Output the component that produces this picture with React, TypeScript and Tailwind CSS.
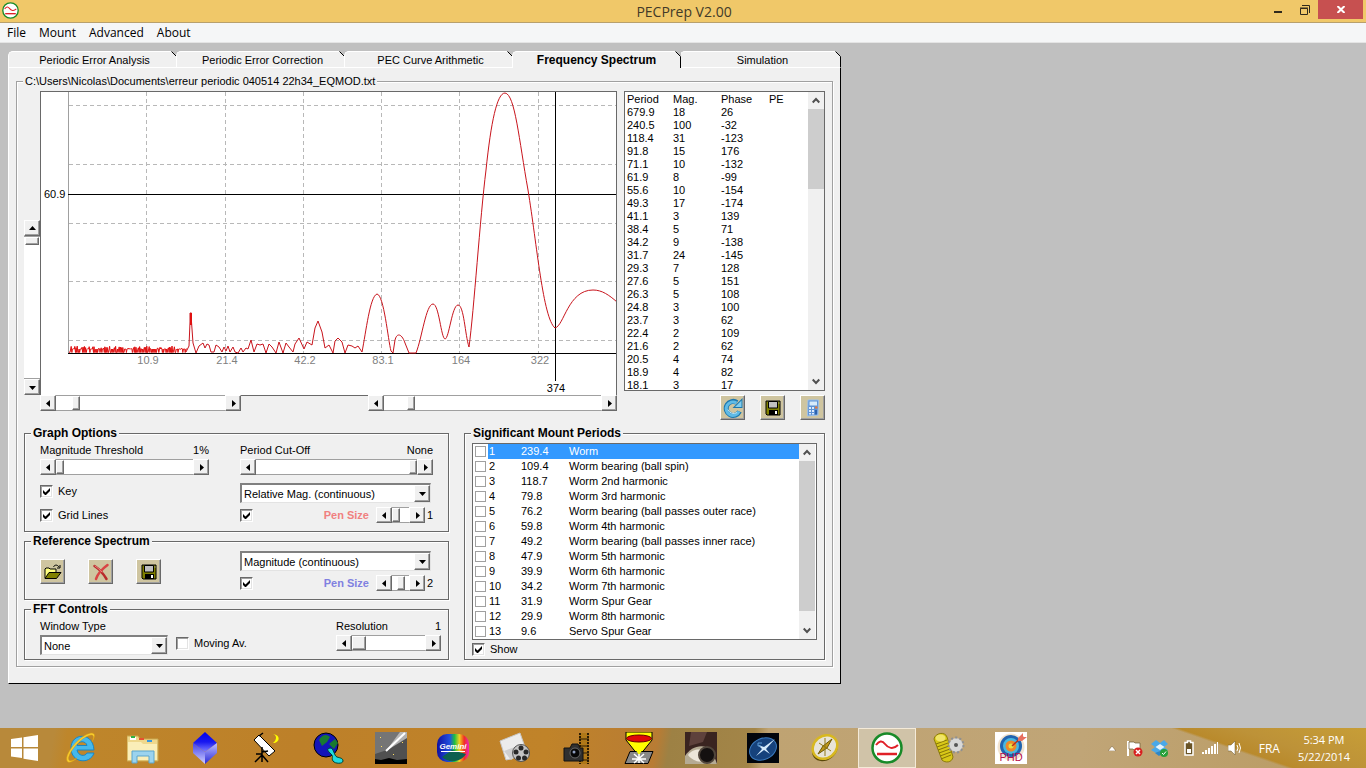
import type { ReactNode } from 'react'

const MENU = ['File', 'Mount', 'Advanced', 'About']

const TABS = [
  'Periodic Error Analysis',
  'Periodic Error Correction',
  'PEC Curve Arithmetic',
  'Frequency Spectrum',
  'Simulation',
]

const SPECTRUM = [
  ['679.9', '18', '26'],
  ['240.5', '100', '-32'],
  ['118.4', '31', '-123'],
  ['91.8', '15', '176'],
  ['71.1', '10', '-132'],
  ['61.9', '8', '-99'],
  ['55.6', '10', '-154'],
  ['49.3', '17', '-174'],
  ['41.1', '3', '139'],
  ['38.4', '5', '71'],
  ['34.2', '9', '-138'],
  ['31.7', '24', '-145'],
  ['29.3', '7', '128'],
  ['27.6', '5', '151'],
  ['26.3', '5', '108'],
  ['24.8', '3', '100'],
  ['23.7', '3', '62'],
  ['22.4', '2', '109'],
  ['21.6', '2', '62'],
  ['20.5', '4', '74'],
  ['18.9', '4', '82'],
  ['18.1', '3', '17'],
]

const MOUNT_PERIODS = [
  ['239.4', 'Worm'],
  ['109.4', 'Worm bearing (ball spin)'],
  ['118.7', 'Worm 2nd harmonic'],
  ['79.8', 'Worm 3rd harmonic'],
  ['76.2', 'Worm bearing (ball passes outer race)'],
  ['59.8', 'Worm 4th harmonic'],
  ['49.2', 'Worm bearing (ball passes inner race)'],
  ['47.9', 'Worm 5th harmonic'],
  ['39.9', 'Worm 6th harmonic'],
  ['34.2', 'Worm 7th harmonic'],
  ['31.9', 'Worm Spur Gear'],
  ['29.9', 'Worm 8th harmonic'],
  ['9.6', 'Servo Spur Gear'],
]

const RAISED =
  'bg-[#f0f0f0] border border-t-white border-l-white border-r-[#696969] border-b-[#696969] shadow-[inset_-1px_-1px_0_#a0a0a0]'

type Direction = 'left' | 'right' | 'up' | 'down'

const ARROWS: Record<Direction, string> = {
  left: 'M5 0v7L1 3.5z',
  right: 'M2 0v7l4-3.5z',
  up: 'M0 5h7L3.5 1z',
  down: 'M0 2h7L3.5 6z',
}

function Arrow({ dir }: { dir: Direction }) {
  return (
    <svg width="7" height="7" viewBox="0 0 7 7">
      <path d={ARROWS[dir]} />
    </svg>
  )
}

function ArrowButton({ dir, label }: { dir: Direction; label: string }) {
  return (
    <button
      type="button"
      aria-label={label}
      className={`flex h-4 w-4 shrink-0 items-center justify-center ${RAISED}`}
    >
      <Arrow dir={dir} />
    </button>
  )
}

const THUMB =
  'appearance-none [&::-webkit-slider-thumb]:appearance-none [&::-webkit-slider-thumb]:bg-[#f0f0f0] [&::-webkit-slider-thumb]:border [&::-webkit-slider-thumb]:border-t-white [&::-webkit-slider-thumb]:border-l-white [&::-webkit-slider-thumb]:border-r-[#696969] [&::-webkit-slider-thumb]:border-b-[#696969] [&::-webkit-slider-thumb]:shadow-[inset_-1px_-1px_0_#a0a0a0]'

type HScrollProps = {
  label: string
  value: number
  className: string
  wide?: boolean
}

function HScroll({ label, value, className, wide }: HScrollProps) {
  return (
    <div className={`flex h-4 ${className}`}>
      <ArrowButton dir="left" label={`${label} down`} />
      <input
        type="range"
        aria-label={label}
        defaultValue={value}
        className={`m-0 h-4 min-w-0 flex-1 border-y border-[#a0a0a0] bg-white [&::-webkit-slider-thumb]:h-[14px] ${
          wide ? '[&::-webkit-slider-thumb]:w-[14px]' : '[&::-webkit-slider-thumb]:w-2'
        } ${THUMB}`}
      />
      <ArrowButton dir="right" label={`${label} up`} />
    </div>
  )
}

function VScroll() {
  return (
    <div className="flex h-[175px] w-4 flex-col">
      <ArrowButton dir="up" label="Scroll up" />
      <input
        type="range"
        aria-label="Vertical scale"
        defaultValue={0}
        className={`m-0 min-h-0 w-4 flex-1 border-x border-[#a0a0a0] bg-white [writing-mode:vertical-lr] [&::-webkit-slider-thumb]:h-2 [&::-webkit-slider-thumb]:w-[14px] ${THUMB}`}
      />
      <ArrowButton dir="down" label="Scroll down" />
    </div>
  )
}

function ListScroll({ thumb }: { thumb: string }) {
  return (
    <div className="flex w-4 shrink-0 flex-col bg-[#f0f0f0]">
      <button type="button" aria-label="Scroll list up" className="flex h-[17px] items-center justify-center">
        <svg width="8" height="7" viewBox="0 0 8 7" fill="none" stroke="#505050" strokeWidth="2">
          <path d="M.7 5.5 4 2l3.300 3.500" />
        </svg>
      </button>
      <div className={`bg-[#cdcdcd] ${thumb}`} />
      <button type="button" aria-label="Scroll list down" className="mt-auto flex h-[17px] items-center justify-center">
        <svg width="8" height="7" viewBox="0 0 8 7" fill="none" stroke="#505050" strokeWidth="2">
          <path d="M.7 1.500 4 5l3.300-3.500" />
        </svg>
      </button>
    </div>
  )
}

function Check({ label, hideLabel, checked }: { label: string; hideLabel?: boolean; checked?: boolean }) {
  return (
    <label className="flex h-[13px] items-center gap-[5px]">
      <span className="relative flex h-[13px] w-[13px]">
        <input
          type="checkbox"
          aria-label={label}
          defaultChecked={checked}
          className="peer h-[13px] w-[13px] appearance-none border border-t-[#696969] border-l-[#696969] border-r-white border-b-white bg-white shadow-[inset_1px_1px_0_#a0a0a0,inset_-1px_-1px_0_#e3e3e3]"
        />
        <svg className="pointer-events-none absolute top-[3px] left-[3px] hidden peer-checked:block" width="7" height="7" viewBox="0 0 7 7">
          <path d="M0 2v3l2 2h1l4-4V0L2.500 4.500z" />
        </svg>
      </span>
      {!hideLabel && <span>{label}</span>}
    </label>
  )
}

function Combo({ label, value, className }: { label: string; value: string; className: string }) {
  return (
    <div className={`relative h-5 ${className}`}>
      <select
        aria-label={label}
        className="h-5 w-full appearance-none rounded-none border-t-2 border-l-2 border-r border-b border-t-[#808080] border-l-[#808080] border-r-[#e3e3e3] border-b-[#e3e3e3] bg-white pl-[2px] text-[11px] leading-4"
      >
        <option>{value}</option>
      </select>
      <span className={`pointer-events-none absolute top-[2px] right-[1px] flex h-[17px] w-4 items-center justify-center ${RAISED}`}>
        <Arrow dir="down" />
      </span>
    </div>
  )
}

function Group({ title, className, children }: { title: string; className: string; children: ReactNode }) {
  return (
    <fieldset className={`min-w-0 border border-[#696969] shadow-[1px_1px_0_#fff,inset_1px_1px_0_#fff] ${className}`}>
      <legend className="ml-[6px] bg-[#f0f0f0] px-[2px] text-[12px] leading-[13px] font-bold">{title}</legend>
      {children}
    </fieldset>
  )
}

function ToolButton({ label, children }: { label: string; children: ReactNode }) {
  return (
    <button
      type="button"
      aria-label={label}
      className="flex h-[25px] w-[25px] items-center justify-center border border-t-white border-l-white border-r-[#696969] border-b-[#696969] bg-[#cfc5a0] shadow-[inset_-1px_-1px_0_#a0a0a0]"
    >
      {children}
    </button>
  )
}

function FloppyIcon() {
  return (
    <svg width="16" height="16" viewBox="0 0 16 16">
      <path d="M1 1h14v14H2l-1-1z" fill="#808000" stroke="#000" />
      <path d="M3.500 1.500h9v6.500h-9z" fill="#c0c0c0" stroke="#000" />
      <path d="M4 10h9v5H4z" />
      <path d="M10 11h2v3h-2z" fill="#fff" />
      <path d="M13.500 2.500h1v1h-1z" fill="#c0c0c0" />
    </svg>
  )
}

function RefreshIcon() {
  return (
    <svg width="20" height="20" viewBox="0 0 20 20">
      <path d="M16.500 13.500a7 7 0 1 1-2.500-9" fill="none" stroke="#1d78ae" strokeWidth="5" />
      <path d="M19.500 0v10H9.500z" fill="#1d78ae" />
      <path d="M16 13.500a6.700 6.700 0 1 1-2.500-8.500" fill="none" stroke="#5fbbe6" strokeWidth="3" />
      <path d="M18.500 2.500V9H12z" fill="#7fcdf0" />
      <path d="M14 14.500a6 6 0 0 1-9-3" fill="none" stroke="#c2e8f8" />
    </svg>
  )
}

function CalculatorIcon() {
  return (
    <svg width="16" height="18" viewBox="0 0 16 18">
      <path d="M3 1h10.500L13 16l-10.500 1z" fill="#5d93d6" stroke="#9cc0ea" />
      <path d="M4.500 2.500h7.500v4H4.500z" fill="#d8ebfb" />
      <path d="M4 8h2v2H4zm3 0h2v2H7zm-3 3h2v2H4zm3 0h2v2H7zm-3 3h2v1.500H4zm3 0h2v1.500H7z" fill="#dceafc" />
      <path d="M10 7.500h2.500v2H10z" fill="#e8793a" />
      <path d="M10 11h2v4.500h-2z" fill="#2d62ad" />
    </svg>
  )
}

function OpenIcon() {
  return (
    <svg width="18" height="16" viewBox="0 0 18 16">
      <path d="M1 14V5l1-1h3l1 1h6v3" fill="#ffff80" stroke="#000" />
      <path d="M1 14.500 5 8.500h12l-4.500 6z" fill="#808000" stroke="#000" />
      <path d="M9.500 3c1-2.500 4-2.500 5.500 0M16 1v3h-3" fill="none" stroke="#000" />
    </svg>
  )
}

function DeleteIcon() {
  return (
    <svg width="18" height="18" viewBox="0 0 18 18" fill="none" strokeLinecap="round">
      <path d="M2.500 3C7 6 11 10 14.500 16" stroke="#b82c2c" strokeWidth="2.500" />
      <path d="M15.500 2C10 6 6 10 4 16" stroke="#d84444" strokeWidth="2.500" />
      <path d="M3 3c3 2 5 4 7 6" stroke="#ee8080" />
    </svg>
  )
}

// low level noise at the short period end, then the measured humps
function spectrumPath() {
  const pts: number[][] = [[69, 352]]
  for (let i = 0; i < 98; i++) {
    const x = 70 + i * 1.2
    const n = Math.abs(Math.sin(i * i * 12.9898) * 43758.5453) % 1
    const top = x > 150 && x < 168 ? 7 : 5
    pts.push([x, n < 0.3 ? 352.5 : 351 - n * top])
    pts.push([x + 0.7, n > 0.6 ? 352.5 : 349])
  }
  return 'M' + pts.map(p => `${p[0].toFixed(1)} ${p[1].toFixed(1)}`).join('L')
}

const HUMPS =
  'M186 352L189 346L190 322V313H191.500V322L193 343L196 353L199 346L203 343L205 348L207 344L209 345L211 352L214 352L216 345L219 347L222 352L224 347L226 351L228 346L230 352L233 347L235 352L238 353L241 348L243 352L246 348L248 349L251 340L254 352L257 344L260 345L263 344L266 353L269 344L272 347L276 353L279 342L283 353L286 343L289 347L293 352L295 344L299 338L304 349L307 342L312 345L315 328L318 321L322 332L325 348L329 345L333 353L335 341L338 338L342 342L345 353L348 345L352 346L355 348L358 346L362 352C366 332 370 296 377 294C384 295 388 340 391 351L393 353L395 340C397 332 402 334 405 343L409 353H416C422 338 426 304 433 304C439 304 441 338 445 339C449 339 452 305 458 305C464 305 465 335 469 347C474 310 480 218 486 170C491 122 497 93 505 93C515 94 519 140 528 190C537 245 543 318 555 328C564 326 568 290 593 290C602 290 609 295 617 302'

function Graph() {
  const ticks: [number, string][] = [
    [146, '10.9'],
    [225, '21.4'],
    [303, '42.2'],
    [381, '83.1'],
    [459, '164'],
    [538, '322'],
  ]
  return (
    <svg className="block h-auto w-full" viewBox="41 92 575 303" fontSize="11">
      <path d="M68.500 92v261" stroke="#a0a0a0" />
      <g stroke="#b8b8b8" strokeDasharray="4 3">
        {[105, 164, 223, 281, 340].map(y => (
          <path key={y} d={`M69 ${y}.5h548`} />
        ))}
        {ticks.map(([x]) => (
          <path key={x} d={`M${x}.5 92v261`} />
        ))}
      </g>
      <path d="M68 194.500h549M68 353.500h549M555.500 92v289" stroke="#000" />
      <path d={spectrumPath()} fill="none" stroke="#e01010" />
      <path d={HUMPS} fill="none" stroke="#c8141c" />
      <path d="M191 313v12" stroke="#e01010" strokeWidth="2" />
      {ticks.map(([x, t]) => (
        <text key={t} x={x + 2} y="364" textAnchor="middle" fill="#808080">
          {t}
        </text>
      ))}
      <text x="44" y="198">60.9</text>
      <text x="556" y="392" textAnchor="middle">374</text>
    </svg>
  )
}

function PecLogo({ size }: { size: number }) {
  return (
    <svg width={size} height={size} viewBox="0 0 32 32" fill="none">
      <circle cx="16" cy="16" r="14.500" fill="#fff" stroke="#188a28" strokeWidth="2.500" />
      <path d="M5 13c3-4 6-5 9-1s8 6 13 1" stroke="#e02028" strokeWidth="2" />
      <path d="M6 22h20" stroke="#e02028" strokeWidth="2.500" />
    </svg>
  )
}

const TASK_ICONS: { name: string; art: ReactNode }[] = [
  {
    name: 'Internet Explorer',
    art: (
      <>
        <path d="M29 18H12c1 6 8 7 10 3h7c-4 12-23 10-23-5S28-1 29 18z" fill="#45b8ec" stroke="#1a86c4" />
        <path d="M12 13.500h10c-1-5-9-5-10 0z" fill="#c08a30" stroke="#1a86c4" />
        <path d="M3 30C-3 26 12 4 26 1c5 0 4 4 1 9 2-5 2-7-1-7C15 5 1 24 4 28c1 2 5 0 8-2-3 3-7 5-9 4z" fill="#f8cf30" stroke="#d99a10" strokeWidth=".5" />
      </>
    ),
  },
  {
    name: 'File Explorer',
    art: (
      <>
        <path d="M0 4h11l2 3h18v22H0z" fill="#efd88c" stroke="#c9a850" />
        <path d="M3 5h6v3H3z" fill="#fff" />
        <path d="M4 4h4v2H4z" fill="#2fb344" />
        <path d="M12 6h5v2h-5z" fill="#e85030" />
        <path d="M20 8h5v2h-5z" fill="#3898e0" />
        <path d="M1 10h13l2 2h14v16H1z" fill="#faeeb8" />
        <path d="M5 31V19h22v12h-5v-7H10v7z" fill="#9bd3ee" stroke="#5aa5cc" />
      </>
    ),
  },
  {
    name: 'Blue crystal',
    art: (
      <>
        <defs>
          <linearGradient id="gem" x1="0" x2="0" y1="0" y2="1">
            <stop offset="0" stopColor="#0000f0" />
            <stop offset=".5" stopColor="#1818f0" />
            <stop offset="1" stopColor="#8080ff" />
          </linearGradient>
          <linearGradient id="gemSide" x1="0" x2="0" y1="0" y2="1">
            <stop offset="0" stopColor="#4040e8" />
            <stop offset="1" stopColor="#d0d0ff" />
          </linearGradient>
          <linearGradient id="gemDark" x1="0" x2="0" y1="0" y2="1">
            <stop offset="0" stopColor="#c0c0ff" />
            <stop offset="1" stopColor="#2828d8" />
          </linearGradient>
        </defs>
        <path d="M16 0 28 11 16 20 4 11z" fill="url(#gem)" />
        <path d="M4 11l12 9v12L4 21z" fill="url(#gemSide)" />
        <path d="M28 11l-12 9v12l12-11z" fill="url(#gemDark)" />
      </>
    ),
  },
  {
    name: 'Telescope',
    art: (
      <>
        <path d="M3 8 8 3l16 16-6 5z" fill="#fff" stroke="#000" />
        <path d="M8 4l4-3M11 15v15M11 20l6-1M11 23l-7 7M11 23l6 7M5 22h6" stroke="#000" strokeWidth="1.500" />
        <path d="M22 2c4 1 4 6 0 9 7 0 8-8 0-9z" fill="#ff0" />
      </>
    ),
  },
  {
    name: 'Globe',
    art: (
      <>
        <circle cx="13" cy="13" r="12" fill="#1414b8" stroke="#000" />
        <path d="M6 8c3-6 8-6 11-3l-3 5-5 4zM16 12l6-5 3 4-4 6z" fill="#187a30" />
        <path d="M17 16c4 0 4 8 7 9s6 1 6 4-8 3-10 0 1-4-2-7-5-5-1-6z" fill="#20dce0" stroke="#043" />
      </>
    ),
  },
  {
    name: 'Comet',
    art: (
      <>
        <path d="M0 0h32v32H0z" fill="#505050" />
        <path d="M0 0h32L12 18 0 22z" fill="#757575" />
        <path d="M11 19 25 0h7v6z" fill="#c8c8c8" opacity=".8" />
        <path d="M11 19 30 1" stroke="#fff" strokeWidth="2" />
        <path d="M0 27l6 1 8-2 8 2 10-1v5H0z" />
        <path d="M5 5h1v1H5zM18 22h1v1h-1zM27 10h1v1h-1zM6 14h1v1H6z" fill="#ffe060" />
      </>
    ),
  },
  {
    name: 'Gemini',
    art: (
      <>
        <defs>
          <linearGradient id="rainbow">
            <stop offset="0" stopColor="#1010a0" />
            <stop offset=".4" stopColor="#2050e0" />
            <stop offset=".55" stopColor="#20c040" />
            <stop offset=".7" stopColor="#f0d020" />
            <stop offset=".85" stopColor="#f03020" />
            <stop offset="1" stopColor="#f020c0" />
          </linearGradient>
        </defs>
        <rect y="2" width="32" height="28" rx="10" fill="url(#rainbow)" />
        <path d="M5 25c6 6 18 6 24-3l-14-4z" fill="#0c6050" />
        <text x="16" y="17" textAnchor="middle" fontSize="8" fontWeight="bold" fontStyle="italic" fill="#fff">
          Gemini
        </text>
        <path d="M4 19.500h24" stroke="#fff" />
      </>
    ),
  },
  {
    name: 'Video',
    art: (
      <>
        <path d="M1 9 21 1l5 14-14 12-5 1z" fill="#ececec" stroke="#c8c8c8" />
        <path d="M5 19 24 12l2 7-14 9z" fill="#cfcfcf" />
        <circle cx="22" cy="21" r="8.500" fill="#c4c4c4" stroke="#555" />
        <g fill="#282828">
          <circle cx="22" cy="16" r="2.500" />
          <circle cx="17" cy="20" r="2.500" />
          <circle cx="27" cy="20" r="2.500" />
          <circle cx="19.500" cy="26" r="2.500" />
          <circle cx="25.500" cy="26" r="2.500" />
        </g>
      </>
    ),
  },
  {
    name: 'Camera capture',
    art: (
      <>
        <path d="M18 1h10v31H18z" fill="#b07818" />
        <path d="M19 1v31M27 1v31" stroke="#2c1c04" strokeWidth="2" strokeDasharray="2 1" />
        <path d="M18 7h10M18 14h10M18 21h10M18 28h10" stroke="#2c1c04" />
        <path d="M3 16h6l2-4h6l2 4h3v13H3z" fill="#303030" stroke="#101010" />
        <circle cx="14" cy="21" r="5" fill="#080808" stroke="#686868" />
        <circle cx="13" cy="20" r="1.500" fill="#90a0c0" />
      </>
    ),
  },
  {
    name: 'Collimation',
    art: (
      <>
        <path d="M3 0h26v8L17 23h-2L3 8z" fill="#ff0" stroke="#000" />
        <ellipse cx="16" cy="6.500" rx="12.500" ry="3.500" fill="#e00808" stroke="#600" />
        <path d="M7 19.500h23l-5 12H2z" fill="#888" stroke="#000" />
        <path d="M12 17h8l-4 6z" fill="#ff0" />
        <path d="M16 22v9M9 27h14M11 22l10 9M21 22l-10 9" stroke="#fff" strokeWidth="1.500" />
      </>
    ),
  },
  {
    name: 'Eyepiece',
    art: (
      <>
        <path d="M0 0h32v32H0z" fill="#3a2420" />
        <path d="M6 0h16l-4 10-14 4z" fill="#5e413c" />
        <path d="M0 32V24c6-10 18-13 27-6l5 14z" fill="#b5ab94" />
        <path d="M3 23c5-7 13-6 17-4v10c-7 2-13-1-17-6z" fill="#ece6da" />
        <circle cx="22" cy="23" r="8" fill="#141010" stroke="#51463c" strokeWidth="2" />
      </>
    ),
  },
  {
    name: 'Sky compass',
    art: (
      <>
        <path d="M0 1h32v30H0z" fill="#02050c" />
        <ellipse cx="16" cy="17" rx="14" ry="10.500" transform="rotate(-25 16 17)" fill="#16427c" stroke="#3a79bd" />
        <path d="M17 15 28 7l-9 10 4 5-6-4-8 6 6-7-4-4z" fill="#d4eafc" />
        <path d="M15 11h-4v3h3" fill="none" stroke="#5a9ad4" />
      </>
    ),
  },
  {
    name: 'Gold compass',
    art: (
      <>
        <ellipse cx="16" cy="17" rx="14" ry="11" transform="rotate(-38 16 17)" fill="#5a4808" />
        <ellipse cx="16" cy="15" rx="13" ry="11" transform="rotate(-38 16 15)" fill="#e8e4d8" stroke="#d8b820" strokeWidth="2.500" />
        <path d="M9 22l5-8 9-7-5 9z" fill="#c09818" stroke="#6c5808" />
        <path d="M10 11l12 8M16 6v18" stroke="#907818" />
      </>
    ),
  },
  { name: 'PECPrep', art: <PecLogo size={32} /> },
  {
    name: 'EQMOD',
    art: (
      <>
        <path d="M1 7c1-6 11-8 13-2l6 20c-1 6-8 6-11 3z" fill="#d8c818" stroke="#8c7c08" />
        <path d="M3 12l11-4M4 15l11-4M5 18l11-4M6 21l11-4M7 24l11-4M8 27l10-4" stroke="#857408" />
        <ellipse cx="7.500" cy="6" rx="5" ry="3.500" fill="#f0e468" />
        <circle cx="23" cy="13" r="7" fill="#c6c6c6" stroke="#909090" strokeWidth="3" strokeDasharray="2 2" />
        <circle cx="23" cy="13" r="6.500" fill="#d8d8d8" />
        <circle cx="23" cy="13" r="2" fill="#565656" />
      </>
    ),
  },
  {
    name: 'PHD Guiding',
    art: (
      <>
        <path d="M0 0h32v32H0z" fill="#fff" />
        <circle cx="16" cy="15" r="13.500" fill="#f1e3d0" />
        <circle cx="16" cy="14" r="11" fill="#2164b0" />
        <circle cx="16" cy="14" r="8" fill="#48b8e0" />
        <circle cx="16" cy="14" r="5.500" fill="#f08828" />
        <circle cx="16" cy="14" r="2.500" fill="#e8e040" />
        <path d="M17 14 28 4" stroke="#b83020" strokeWidth="1.500" />
        <path d="M23 6l5-5v4h4l-5 4h-4z" fill="#e87060" />
        <text x="16" y="29" textAnchor="middle" fontSize="11" fill="#b8104c">PHD</text>
      </>
    ),
  },
]

function Taskbar() {
  return (
    <footer className="flex h-10 items-stretch bg-[linear-gradient(19deg,transparent_48%,#b98a2c_50%,#bd9238_65%,#c79e37_100%),linear-gradient(100deg,#b8893a_0%,#b8893a_4%,#be862b_5%,#bd8029_22%,#c08329_40%,#b87c34_48%,#9d8144_49%,#a38548_55%,#bfa372_56%,#c0a577_79%,#b99a60_100%)] bg-[length:260px_100%,100%_100%] bg-[position:right,left] bg-no-repeat">
      <button type="button" aria-label="Start" className="flex w-[50px] items-center justify-center">
        <svg width="28" height="26" viewBox="0 0 28 26" fill="#fff">
          <path d="M0 4l11-1.500V12H0zM12.500 2.300 27 0v12H12.500zM0 13.500h11V23L0 21.500zM12.500 13.500H27V26l-14.500-2.300z" />
        </svg>
      </button>
      {TASK_ICONS.map(({ name, art }) => (
        <button
          key={name}
          type="button"
          aria-label={name}
          className={`mx-[2px] flex w-[58px] items-center justify-center ${
            name === 'PECPrep' ? 'border border-[#f4ead8] bg-[#d0c3a8]' : ''
          }`}
        >
          <svg width="32" height="32" viewBox="0 0 32 32">
            {art}
          </svg>
        </button>
      ))}
      <div className="ml-auto flex items-center pr-4 font-['Open_Sans','Noto_Sans',sans-serif] text-[12px] text-white">
        <svg className="mr-[10px]" width="8" height="5" viewBox="0 0 8 5">
          <path d="M4 0l4 5H0z" fill="#fff" stroke="#70562c" strokeWidth=".5" />
        </svg>
        <svg className="mr-2" width="17" height="17" viewBox="0 0 17 17">
          <path d="M2 1v15" stroke="#fff" strokeWidth="2" />
          <path d="M3 2h5l1 1h5v7H8L7 9H3z" fill="#fff" stroke="#6c5934" strokeWidth=".7" />
          <circle cx="12" cy="12" r="4.500" fill="#d82020" />
          <path d="M10 10l4 4M14 10l-4 4" stroke="#fff" strokeWidth="1.500" />
        </svg>
        <svg className="mr-4" width="17" height="17" viewBox="0 0 17 17">
          <path d="M5 0l4 3 4-3 4 4-4 3 4 3-5 3-3-2-4 2-5-3 4-3-4-3z" fill="#4aa8e8" />
          <path d="M4.500 7 9 4l4.500 3L9 10z" fill="#e4f3fc" />
          <path d="M4 13l5-2 3 2-4 3z" fill="#2d86c8" />
          <circle cx="13" cy="13" r="4" fill="#28a038" />
          <path d="M11 13l1.500 1.500L15 11.500" stroke="#fff" fill="none" />
        </svg>
        <svg className="mr-2" width="10" height="16" viewBox="0 0 10 16">
          <path d="M3.500 1h3v1.500H9V15H1V2.500h2.500z" fill="#6a5426" stroke="#fff" strokeWidth="1.500" />
          <path d="M3 9h4v4H3z" fill="#fff" />
        </svg>
        <svg className="mr-[10px]" width="16" height="12" viewBox="0 0 16 12" fill="#fff">
          <path d="M0 10h2v2H0zM3 8h2v4H3zM6 6h2v6H6zM9 4h2v8H9zM12 2h2v10h-2zM15 0h1v12h-1z" />
        </svg>
        <svg className="mr-[17px]" width="14" height="14" viewBox="0 0 14 14">
          <path d="M0 4h3l4-4v14L3 10H0z" fill="#fff" stroke="#6a5426" strokeWidth=".5" />
          <path d="M9 4q2 3 0 6M11 2q3 5 0 10" fill="none" stroke="#fff" />
        </svg>
        <span className="mr-[18px]">FRA</span>
        <time className="text-center text-[11px] leading-[17px]">
          5:34 PM
          <br />
          5/22/2014
        </time>
      </div>
    </footer>
  )
}

function SpectrumList() {
  return (
    <div className="flex h-[300px] border border-[#696969] bg-white">
      <div className="min-w-0 flex-1 pt-px">
        <table className="w-full table-fixed border-collapse text-left leading-[13px]">
          <thead>
            <tr>
              <th className="w-12 p-0 pl-[2px] font-normal">Period</th>
              <th className="w-12 p-0 font-normal">Mag.</th>
              <th className="w-12 p-0 font-normal">Phase</th>
              <th className="p-0 font-normal">PE</th>
            </tr>
          </thead>
          <tbody>
            {SPECTRUM.map(([period, mag, phase]) => (
              <tr key={period}>
                <td className="p-0 pl-[2px]">{period}</td>
                <td className="p-0">{mag}</td>
                <td className="p-0">{phase}</td>
                <td className="p-0" />
              </tr>
            ))}
          </tbody>
        </table>
      </div>
      <ListScroll thumb="h-20" />
    </div>
  )
}

function MountPeriods() {
  return (
    <Group title="Significant Mount Periods" className="h-[233px] w-[361px]">
      <div className="px-[7px] pt-[3px]">
        <div className="flex h-[197px] border border-[#696969] bg-white pr-px">
          <ul className="min-w-0 flex-1">
            {MOUNT_PERIODS.map(([period, name], i) => (
              <li key={name}>
                <label className="flex h-[15px] items-center gap-[2px] pl-[2px] leading-[15px]">
                  <input
                    type="checkbox"
                    className="h-[11px] w-[11px] appearance-none border border-[#a0a0a0] bg-white"
                  />
                  <span className={`flex flex-1 pl-px ${i === 0 ? 'bg-[#3399ff] text-white' : ''}`}>
                    <span className="w-8">{i + 1}</span>
                    <span className="w-12">{period}</span>
                    <span>{name}</span>
                  </span>
                </label>
              </li>
            ))}
          </ul>
          <ListScroll thumb="h-[150px]" />
        </div>
        <div className="pt-[3px]">
          <Check label="Show" checked />
        </div>
      </div>
    </Group>
  )
}

function PenSize({ color, value, pos }: { color: string; value: number; pos: number }) {
  return (
    <div className="mt-1 flex h-4 w-[193px] items-center">
      <Check label="Show curve" hideLabel checked />
      <span className={`ml-auto pr-[7px] text-[11px] font-bold ${color}`}>Pen Size</span>
      <HScroll label="Pen size" value={pos} className="w-[49px]" />
      <span className="w-2 text-right">{value}</span>
    </div>
  )
}

function Controls() {
  return (
    <div className="flex w-[425px] flex-col gap-[3px]">
      <Group title="Graph Options" className="h-[105px]">
        <div className="flex gap-[31px] pt-1 pl-[15px] leading-[13px]">
          <div className="flex w-[169px] flex-col">
            <div className="flex justify-between">
              <span>Magnitude Threshold</span>
              <span>1%</span>
            </div>
            <HScroll label="Magnitude Threshold" value={0} className="mt-[2px]" />
            <div className="flex flex-col gap-[11px] pt-[10px]">
              <Check label="Key" checked />
              <Check label="Grid Lines" checked />
            </div>
          </div>
          <div className="flex w-[193px] flex-col">
            <div className="flex justify-between">
              <span>Period Cut-Off</span>
              <span>None</span>
            </div>
            <HScroll label="Period Cut-Off" value={100} className="mt-[2px]" />
            <Combo label="Magnitude type" value="Relative Mag. (continuous)" className="mt-2 w-[191px]" />
            <PenSize color="text-[#f08080]" value={1} pos={0} />
          </div>
        </div>
      </Group>
      <Group title="Reference Spectrum" className="h-[65px]">
        <div className="flex pt-[3px] pl-[15px]">
          <div className="flex w-[200px] gap-[23px] pt-2">
            <ToolButton label="Open reference">
              <OpenIcon />
            </ToolButton>
            <ToolButton label="Clear reference">
              <DeleteIcon />
            </ToolButton>
            <ToolButton label="Save reference">
              <FloppyIcon />
            </ToolButton>
          </div>
          <div className="w-[193px]">
            <Combo label="Reference type" value="Magnitude (continuous)" className="w-[191px]" />
            <PenSize color="text-[#8080e0]" value={2} pos={50} />
          </div>
        </div>
      </Group>
      <Group title="FFT Controls" className="h-[57px]">
        <div className="flex items-start pt-1 pr-[7px] pl-[15px] leading-[13px]">
          <div>
            <span>Window Type</span>
            <Combo label="Window Type" value="None" className="mt-[2px] w-32" />
          </div>
          <div className="pt-[17px] pl-2">
            <Check label="Moving Av." />
          </div>
          <div className="ml-auto w-[105px]">
            <div className="flex justify-between">
              <span>Resolution</span>
              <span>1</span>
            </div>
            <HScroll label="Resolution" value={0} wide className="mt-[2px]" />
          </div>
        </div>
      </Group>
    </div>
  )
}

export default function App() {
  return (
    <div className="flex min-h-screen flex-col bg-[#c0c0c0] font-['Liberation_Sans',Arial,sans-serif] text-[11px] leading-[13px] text-black">
      <header className="flex h-[23px] items-start border-b border-[#b8a06c] bg-[#f0c869] font-['Open_Sans','Noto_Sans',sans-serif]">
        <div className="flex-1 pt-[2px] pl-[2px]">
          <PecLogo size={17} />
        </div>
        <h1 className="text-[14px] leading-[23px] text-[#423a28]">PECPrep V2.00</h1>
        <div className="flex flex-1 justify-end">
          <button type="button" aria-label="Minimize" className="flex h-[19px] w-[26px] items-center justify-center">
            <svg width="8" height="7" viewBox="0 0 8 7">
              <path d="M0 5h8v2H0z" fill="#302a1c" />
            </svg>
          </button>
          <button type="button" aria-label="Restore" className="flex h-[19px] w-[27px] items-center justify-center">
            <svg width="10" height="10" viewBox="0 0 10 10" fill="none" stroke="#302a1c">
              <path d="M.5 3.500h7v6h-7zM0 3h8M2 .5h7.500V8" />
            </svg>
          </button>
          <button type="button" aria-label="Close" className="mr-[3px] flex h-[19px] w-[45px] items-center justify-center bg-[#c75050]">
            <svg width="8" height="7" viewBox="0 0 8 7" stroke="#fff" strokeWidth="2">
              <path d="M.5 0l7 7M7.500 0l-7 7" />
            </svg>
          </button>
        </div>
      </header>
      <nav className="flex h-5 items-center gap-[13px] border-b border-[#e4e4e4] bg-[#f5f6f7] pl-[7px] font-['Open_Sans','Noto_Sans',sans-serif] text-[12px] leading-[18px]">
        {MENU.map(item => (
          <button key={item} type="button">
            {item}
          </button>
        ))}
      </nav>
      <main className="flex-1 px-2 pt-2">
        <div className="w-[833px]">
          <div role="tablist" className="flex">
            {TABS.map(tab => {
              const active = tab === 'Frequency Spectrum'
              return (
                <button
                  key={tab}
                  type="button"
                  role="tab"
                  aria-selected={active}
                  className={`relative h-[17px] w-[168px] rounded-tl-[5px] border-t border-l border-white bg-[#f0f0f0] pt-px last:w-[161px] last:border-r last:border-r-black ${
                    active ? 'z-10 text-[12px] font-bold' : 'border-b pl-1'
                  }`}
                >
                  {tab}
                  <svg className="absolute -top-px -right-px" width="6" height="17" viewBox="0 0 6 17" fill="none" stroke="#000">
                    <path d="M0 0h6v6z" fill="#c0c0c0" stroke="none" />
                    <path d={active ? 'M.5 .5l5 5V17' : 'M.5 .5l5 5'} />
                  </svg>
                </button>
              )
            })}
          </div>
          <div className="border-r border-b border-l border-r-black border-b-black border-l-white bg-[#f0f0f0] px-[7px] pt-[7px] pb-4">
            <fieldset className="min-w-0 border border-[#a0a0a0] shadow-[1px_1px_0_#fff,inset_1px_1px_0_#fff]">
              <legend className="ml-[6px] bg-[#f0f0f0] px-[2px]">
                C:\Users\Nicolas\Documents\erreur periodic 040514 22h34_EQMOD.txt
              </legend>
              <div className="flex items-start px-[7px] pt-[3px]">
                <div className="flex h-[304px] items-end">
                  <VScroll />
                </div>
                <div className="w-[577px]">
                  <div className="border border-b-0 border-[#696969] bg-white">
                    <Graph />
                  </div>
                  <div className="flex justify-between">
                    <HScroll label="Minimum period" value={10} className="w-[201px]" />
                    <div className="flex-1 border-t border-[#696969]" />
                    <HScroll label="Maximum period" value={11} className="w-[249px]" />
                  </div>
                </div>
                <div className="ml-[7px] flex-1">
                  <SpectrumList />
                  <div className="flex justify-end gap-[15px] pt-1">
                    <ToolButton label="Refresh">
                      <RefreshIcon />
                    </ToolButton>
                    <ToolButton label="Save">
                      <FloppyIcon />
                    </ToolButton>
                    <ToolButton label="Calculate">
                      <CalculatorIcon />
                    </ToolButton>
                  </div>
                </div>
              </div>
              <div className="flex justify-between px-[7px] pt-[7px] pb-[6px]">
                <Controls />
                <MountPeriods />
              </div>
            </fieldset>
          </div>
        </div>
      </main>
      <Taskbar />
    </div>
  )
}
